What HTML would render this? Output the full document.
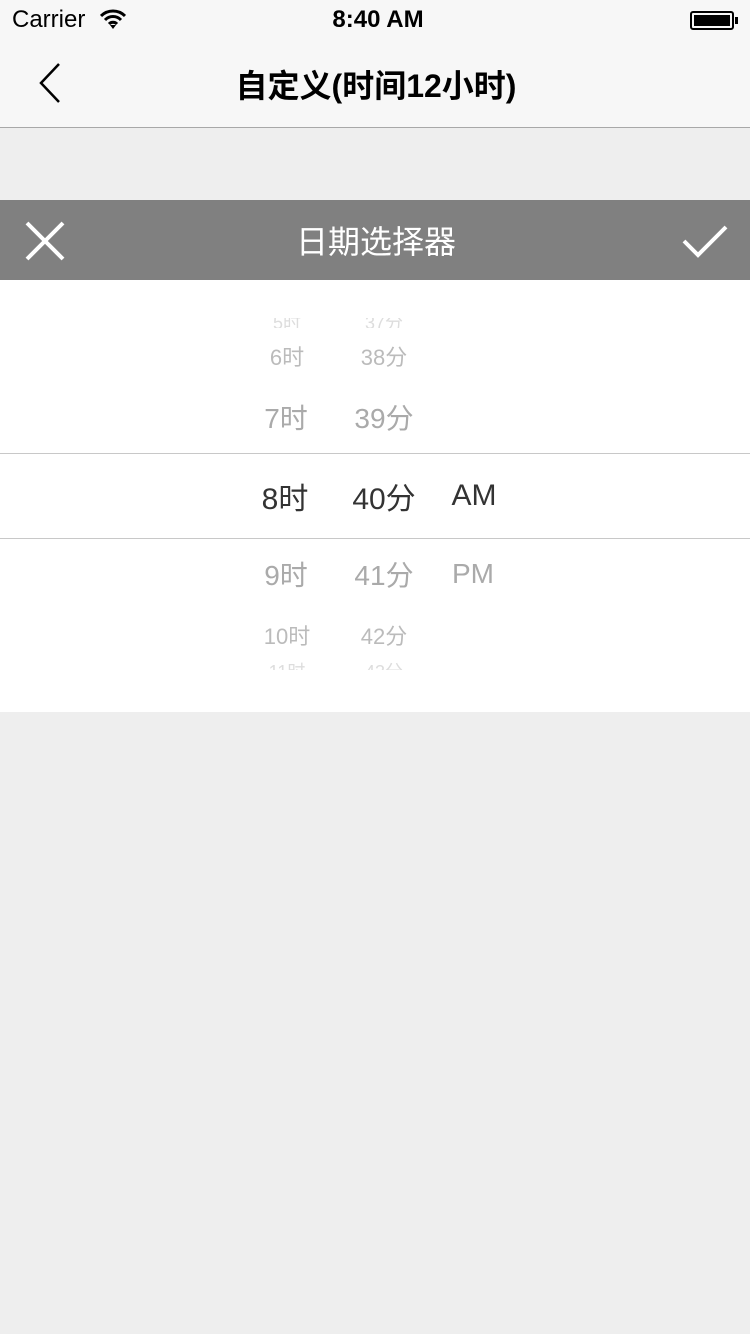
<!DOCTYPE html>
<html><head><meta charset="utf-8"><style>
*{margin:0;padding:0;box-sizing:border-box}
body{width:750px;height:1334px;background:#eeeeee;font-family:"Liberation Sans","Noto Sans CJK SC",sans-serif;position:relative;overflow:hidden}
.abs{position:absolute}
.t{position:absolute;transform:translate(-50%,-50%);white-space:nowrap}
</style></head><body>
<div class="abs" style="left:0;top:0;width:750px;height:128px;background:#f7f7f7;border-bottom:1px solid #a8a8a8"></div>
<div class="abs" style="left:12px;top:6px;font-size:24px;color:#000">Carrier</div>
<svg class="abs" style="left:100px;top:9px" width="26" height="20" viewBox="0 0 26 20"><path d="M1 7 A17 17 0 0 1 25 7 M5 11 A11 11 0 0 1 21 11 M9 15 A5.5 5.5 0 0 1 17 15" stroke="#000" stroke-width="3" fill="none"/><path d="M10 16 L13 20 L16 16Z" fill="#000"/></svg>
<div class="t" style="left:378px;top:20px;font-size:24px;font-weight:bold">8:40 AM</div>
<div class="abs" style="left:690px;top:11px;width:44px;height:19px;border:2px solid #000;border-radius:3px;padding:2px"><div style="background:#000;width:100%;height:100%"></div></div>
<div class="abs" style="left:735px;top:17px;width:3px;height:7px;background:#000"></div>
<svg class="abs" style="left:38px;top:62px" width="24" height="42"><path d="M21 2 L3 21 L21 40" stroke="#000" stroke-width="2.5" fill="none"/></svg>
<div class="t" style="left:376px;top:84px;font-size:32px;font-weight:bold">自定义(时间12小时)</div>
<div class="abs" style="left:0;top:200px;width:750px;height:80px;background:#808080"></div>
<svg class="abs" style="left:25px;top:221px" width="40" height="40"><path d="M2 2 L38 38 M38 2 L2 38" stroke="#fff" stroke-width="4"/></svg>
<div class="t" style="left:376px;top:240px;font-size:32px;color:#fff">日期选择器</div>
<svg class="abs" style="left:682px;top:224px" width="46" height="34"><path d="M2 17 L16 31 L44 3" stroke="#fff" stroke-width="4" fill="none"/></svg>
<div class="abs" style="left:0;top:280px;width:750px;height:432px;background:#fff"></div>
<div class="abs" style="left:0;top:453px;width:750px;height:1px;background:#c8c8c8"></div>
<div class="abs" style="left:0;top:538px;width:750px;height:1px;background:#c8c8c8"></div>
<div class="abs" style="left:0;top:318px;width:750px;height:10px;overflow:hidden">
<div class="t" style="left:287px;top:4px;font-size:18px;color:#ddd">5时</div><div class="t" style="left:384px;top:4px;font-size:18px;color:#ddd">37分</div></div>
<div class="t" style="left:287px;top:356px;font-size:22px;color:#bbb">6时</div><div class="t" style="left:384px;top:356px;font-size:22px;color:#bbb">38分</div>
<div class="t" style="left:286px;top:417px;font-size:28px;color:#aaa">7时</div><div class="t" style="left:384px;top:417px;font-size:28px;color:#aaa">39分</div>
<div class="t" style="left:285px;top:496px;font-size:30px;color:#333">8时</div><div class="t" style="left:384px;top:496px;font-size:30px;color:#333">40分</div><div class="t" style="left:474px;top:496px;font-size:30px;color:#333">AM</div>
<div class="t" style="left:286px;top:574px;font-size:28px;color:#aaa">9时</div><div class="t" style="left:384px;top:574px;font-size:28px;color:#aaa">41分</div><div class="t" style="left:473px;top:574px;font-size:28px;color:#aaa">PM</div>
<div class="t" style="left:287px;top:635px;font-size:22px;color:#bbb">10时</div><div class="t" style="left:384px;top:635px;font-size:22px;color:#bbb">42分</div>
<div class="abs" style="left:0;top:662px;width:750px;height:8px;overflow:hidden">
<div class="t" style="left:287px;top:9px;font-size:18px;color:#ddd">11时</div><div class="t" style="left:384px;top:9px;font-size:18px;color:#ddd">43分</div></div>
</body></html>
